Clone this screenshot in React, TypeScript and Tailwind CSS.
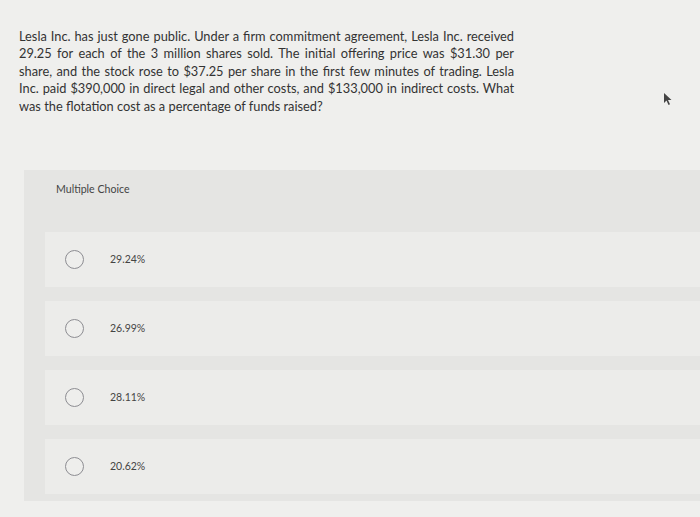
import React from "react";

const options = ["29.24%", "26.99%", "28.11%", "20.62%"];

const lines = [
  "Lesla Inc. has just gone public. Under a firm commitment agreement, Lesla Inc. received",
  "29.25 for each of the 3 million shares sold. The initial offering price was $31.30 per",
  "share, and the stock rose to $37.25 per share in the first few minutes of trading. Lesla",
  "Inc. paid $390,000 in direct legal and other costs, and $133,000 in indirect costs. What",
];

export default function App() {
  return (
    <div
      className="relative w-[700px] h-[517px] overflow-hidden bg-[#efefed] text-[#3a3a3a]"
      style={{ fontFamily: "Lato, 'Open Sans', 'Liberation Sans', sans-serif" }}
    >
      <div className="pl-[19px] pt-[28px] w-[514px] text-[12.8px] leading-[17.4px] text-[#333]">
        {lines.map((l) => (
          <div key={l} className="whitespace-nowrap text-justify [text-align-last:justify]">
            {l}
          </div>
        ))}
        <div className="whitespace-nowrap">was the flotation cost as a percentage of funds raised?</div>
      </div>

      <div className="mt-[55px] ml-[24px] w-[676px] pb-[7px] bg-[#e5e5e3] flex flex-col">
        <div className="h-[62px] pl-[32px] pt-[12px] text-[10.6px] text-[#444]">Multiple Choice</div>
        <div className="flex flex-col gap-[14px] pl-[21px]">
          {options.map((o) => (
            <div key={o} className="h-[55px] bg-[#ececea] flex items-center pl-[20px]">
              <span className="w-[19px] h-[19px] rounded-full border-[1.5px] border-[#8d8d92] bg-[#eeeeec] shrink-0" />
              <span className="ml-[26px] text-[10.5px] text-[#444]">{o}</span>
            </div>
          ))}
        </div>
      </div>

      <svg
        className="absolute left-[663px] top-[92px]"
        width="10"
        height="14"
        viewBox="0 0 10 14"
      >
        <path d="M1 1 L1 11 L3.5 8.5 L5.5 13 L7 12.3 L5 8 L8.5 8 Z" fill="#444" />
      </svg>
    </div>
  );
}
